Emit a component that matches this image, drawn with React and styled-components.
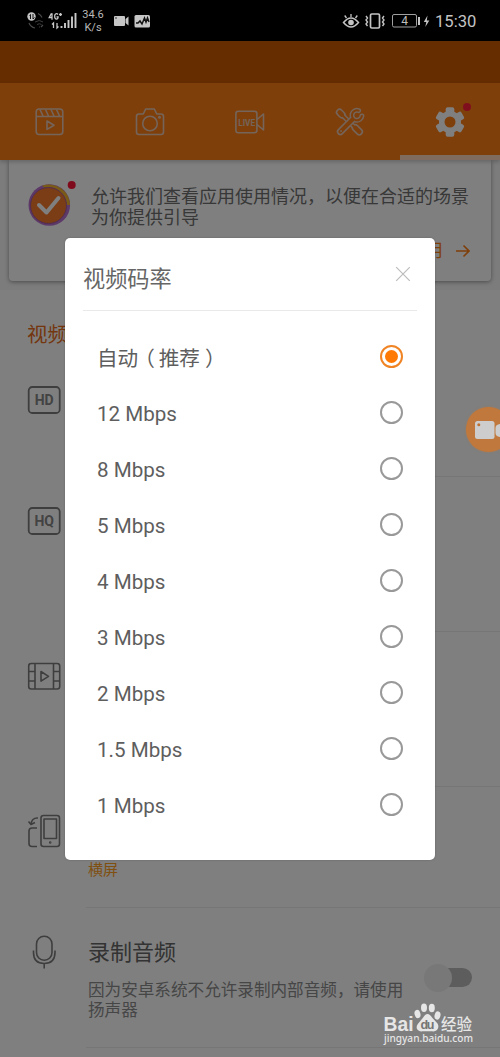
import styled, { createGlobalStyle } from "styled-components";

const BITRATES = [
  "自动（推荐）",
  "12 Mbps",
  "8 Mbps",
  "5 Mbps",
  "4 Mbps",
  "3 Mbps",
  "2 Mbps",
  "1.5 Mbps",
  "1 Mbps",
];

const SignalIcons = () => (
  <svg width="50" height="22" viewBox="27 10 50 22" fill="none">
    <circle cx="31.5" cy="16.5" r="4.2" fill="#c4c4c4" />
    <path d="M29.500 15.500l1-1v4.500M33 14v5l1.500-1.500" stroke="#111" strokeWidth="1" />
    <path d="M38 13.5a7 7 0 0 1 4 4M29 23a8 8 0 0 0 6 5M41 27l2-2" stroke="#4a4a4a" strokeWidth="1.2" />
    <path d="M35 22q4.500-3 8 0M37 24.500q2.500-1.500 4.500 0M39 27h1" stroke="#3d3d3d" strokeWidth="1" />
    <path d="M52 13.200v6.500M52.500 17.500h-3.300l2.300-4.300M58 14.500q-1-1.300-2.500-.5-1 .8-.8 2.600 0 2.500 1.800 2.600 1.600 0 1.600-2.400h-1.600M59 14.500h3M60.500 13v3" stroke="#c8c8c8" strokeWidth="1.300" />
    <path d="M52 24.500l1.500-1.500v5M57 23v5l1.500-1.500" stroke="#c8c8c8" strokeWidth="1.300" />
    <path d="M61.500 28v-2M65 28v-5M68.500 28v-8M72 28V16.500M75.500 28V13" stroke="#c8c8c8" strokeWidth="1.900" />
  </svg>
);

const RecordingIcons = () => (
  <svg width="38" height="14" viewBox="109 14 38 14">
    <rect x="110" y="16" width="11" height="10" rx="1" fill="#c6c6c6" />
    <path d="M121.500 19l3-2.500v9l-3-2.500z" fill="#c6c6c6" />
    <circle cx="112" cy="18" r=".8" fill="#222" />
    <rect x="130.500" y="15" width="15.500" height="12.500" rx="1.500" fill="#c6c6c6" />
    <path d="M132 23h2l2-2 2 3 2.500-6 1.500 4 1.500-4 1.500 4" fill="none" stroke="#111" strokeWidth="1.500" />
  </svg>
);

const DeviceIcons = () => (
  <svg width="90" height="20" viewBox="342 11 90 20" fill="none" stroke="#c4c4c4">
    <path d="M343.500 22.500q7.500-9 15 0-7.500 9-15 0z" strokeWidth="1.500" />
    <circle cx="351" cy="22.500" r="2.800" fill="#c4c4c4" stroke="none" />
    <path d="M351 17v-3M346.500 18l-1.800-2.500M355.500 18l1.800-2.500" strokeWidth="1.300" />
    <rect x="370.500" y="14" width="9" height="14" rx="1.300" strokeWidth="1.700" />
    <path d="M366 16l1.500 2-1.500 2 1.500 2-1.500 2 1.500 2M384 16l-1.500 2 1.500 2-1.500 2 1.500 2-1.500 2" strokeWidth="1.400" />
    <rect x="392.500" y="14.500" width="24" height="12.500" rx="1.500" stroke="#a0a0a0" strokeWidth="1" />
    <path d="M419 17v8" strokeWidth="2" />
    <path d="M427.500 15.500l-3.700 6.500h2.500l-1 5 4-6.500h-2.500z" fill="#c4c4c4" stroke="none" />
    <text x="404.500" y="25.200" fontFamily="Roboto" fontSize="12" textAnchor="middle" fill="#bdbdbd" stroke="none">4</text>
  </svg>
);

const ClapperIcon = () => (
  <TabIcon viewBox="0 0 30 30">
    <rect x="1.200" y="2" width="26.600" height="25.500" rx="3" />
    <path d="M1.200 9.500h26.600M5 2.500l3 6.500M10.500 2.500l3 6.500M16 2.500l3 6.500M21.500 2.500l3 6.500M12 14l7 4.200-7 4.200z" />
  </TabIcon>
);

const CameraIcon = () => (
  <TabIcon viewBox="0 0 30 30">
    <path d="M4 7h4.200l2.500-5h8.600l2.500 5H26q2.500 0 2.500 2.500V25q0 2.500-2.500 2.500H4Q1.500 27.500 1.500 25V9.500Q1.500 7 4 7z" />
    <circle cx="15" cy="16.500" r="7.300" />
    <circle cx="24.500" cy="10.300" r=".7" />
  </TabIcon>
);

const LiveIcon = () => (
  <TabIcon viewBox="0 0 30 30">
    <rect x="0.900" y="4.200" width="21" height="21.600" rx="2.500" />
    <path d="M22 12.500l6.500-5.500v16L22 17.500" />
    <text x="3.200" y="18.600" fontFamily="Roboto" fontSize="9.500" fontWeight="700" textLength="17" lengthAdjust="spacingAndGlyphs" fill="#e8c9b4" stroke="none">LIVE</text>
  </TabIcon>
);

// Each tool is a thick stroke with a thinner one in the bar colour on top, which leaves its outline.
const ToolsIcon = () => (
  <TabIcon viewBox="0 0 30 30" strokeLinecap="round">
    <path d="M4.600 5.400l2.200 2.200M20.300 20.800l4 4" strokeWidth="7.600" />
    <path d="M6 6.800l16 16" strokeWidth="5" strokeLinecap="butt" />
    <path d="M4.600 5.400l2.200 2.200M20.300 20.800l4 4" stroke="#ff7e15" strokeWidth="4.400" />
    <path d="M6 6.800l16 16" stroke="#ff7e15" strokeWidth="2" strokeLinecap="butt" />
    <path d="M5.400 24.600 17 13" strokeWidth="7.200" />
    <path d="M23.600 3.600a5 5 0 1 0 3.300 5.300" strokeWidth="5" />
    <path d="M5.400 24.600 17.500 12.500" stroke="#ff7e15" strokeWidth="4" />
    <path d="M23.600 3.600a5 5 0 1 0 3.300 5.300" stroke="#ff7e15" strokeWidth="2" />
    <circle cx="5.900" cy="24.100" r=".5" strokeWidth="1" />
  </TabIcon>
);

const GearIcon = () => (
  <GearSvg viewBox="0 0 30 30">
    {[0, 60, 120].map((angle) => (
      <rect key={angle} x="10.700" y="0.300" width="8.600" height="29.400" rx="2" transform={`rotate(${angle} 15 15)`} />
    ))}
    <circle cx="15" cy="15" r="11" />
    <circle cx="15" cy="15" r="5.500" fill="#ff7e15" />
  </GearSvg>
);

const CheckBadge = () => (
  <svg width="50" height="48" viewBox="27 178 50 48">
    <circle cx="49.300" cy="205" r="20.800" fill="#b873d0" />
    <path d="M42 185.800a20.800 20.800 0 0 1 28 19.200h-6z" fill="#f5b52e" />
    <circle cx="48.500" cy="205.500" r="18" fill="#f47b2a" stroke="#a65aa0" strokeWidth="1" />
    <path d="M39 205l7.500 7.500L58.500 198" fill="none" stroke="#fff" strokeWidth="4" strokeLinecap="round" strokeLinejoin="round" />
    <circle cx="71.700" cy="185" r="4" fill="#ff1438" />
  </svg>
);

const QualityIcon = ({ children }) => (
  <RowSvg viewBox="27 0 36 36">
    <rect x="28.700" y="5" width="31" height="26" rx="3.500" strokeWidth="1.800" />
    <text x="44.200" y="23.300" fontFamily="Roboto" fontSize="14" fontWeight="700" textAnchor="middle" fill="#868686" stroke="none">
      {children}
    </text>
  </RowSvg>
);

const FilmIcon = () => (
  <RowSvg viewBox="27 0 36 36">
    <rect x="28.700" y="5.500" width="31" height="25.500" rx="2.500" />
    <path d="M35 5.500V31M53.500 5.500V31M29 13.500h6M29 23h6M53.500 13.500h6M53.500 23h6M41 13.500l7.500 4.800-7.500 4.800z" />
  </RowSvg>
);

const RotateIcon = () => (
  <RowSvg viewBox="27 0 36 36">
    <rect x="41" y="2.500" width="18.500" height="31" rx="2.500" />
    <rect x="44" y="6" width="12.500" height="19.500" />
    <circle cx="50.200" cy="29.500" r=".5" />
    <path d="M37 33.500h-5q-3 0-3-3V18q0-3 3-3h5M38 5q-6-.5-7 6M28.500 8.500l2.500 3 4-2" />
  </RowSvg>
);

const MicIcon = () => (
  <RowSvg viewBox="27 0 36 36">
    <rect x="36.500" y="2.300" width="15.500" height="24" rx="7.700" />
    <path d="M33.500 16.500v2q0 11 10.700 11t10.800-11v-2M44.200 29.500v5" />
  </RowSvg>
);

const SettingRow = ({ icon, height, children }) => (
  <Row $height={height}>
    <IconCell>{icon}</IconCell>
    <RowBody>{children}</RowBody>
  </Row>
);

// Full-width brackets hug the text, so each one is nudged back to the middle of its cell
const OptionLabel = ({ text }) => (
  <Label $cjk={text.includes("（")}>
    {text.split(/([（）])/).map((part, i) =>
      /[（）]/.test(part) ? (
        <Bracket key={i} $shift={part === "（" ? -4 : 5}>{part}</Bracket>
      ) : part
    )}
  </Label>
);

const Watermark = () => (
  <WatermarkSvg viewBox="382 1000 94 50" fill="#e6e6e6">
    <text x="383.500" y="1031" fontFamily="Liberation Sans" fontSize="20" fontWeight="700" textLength="30" lengthAdjust="spacingAndGlyphs">Bai</text>
    <ellipse cx="417.500" cy="1014" rx="2.900" ry="4.200" transform="rotate(-15 417.500 1014)" />
    <ellipse cx="424" cy="1007.700" rx="3" ry="4.200" />
    <ellipse cx="431.800" cy="1008" rx="3" ry="4.200" />
    <ellipse cx="437.500" cy="1015.500" rx="2.900" ry="4.200" transform="rotate(15 437.500 1015.500)" />
    <path d="M427.500 1014q2.500 0 4.500 3.500l5.500 6q2 3.500-.5 6.500-2 1.800-5 1.300h-9.500q-3 .5-5-1.500-2-3 .5-6l5-6q2-3.800 4.500-3.800z" />
    <text x="420.500" y="1029" fontFamily="Liberation Sans" fontSize="12.500" fontWeight="700" textLength="14" fill="#757575">du</text>
    <text x="441" y="1029.500" fontFamily="Noto Sans CJK SC" fontSize="15.500" fontWeight="500" textLength="31">经验</text>
    <text x="384" y="1042" fontFamily="Noto Sans" fontSize="10.800" fontWeight="500" textLength="89" lengthAdjust="spacingAndGlyphs">jingyan.baidu.com</text>
  </WatermarkSvg>
);

const App = () => (
  <>
    <GlobalStyle />
    <Screen>
      <StatusBar>
        <SignalIcons />
        <NetSpeed>
          <span>34.6</span>
          <span>K/s</span>
        </NetSpeed>
        <RecordingIcons />
        <StatusRight>
          <DeviceIcons />
          <Clock>15:30</Clock>
        </StatusRight>
      </StatusBar>

      <Strip />
      <TabBar>
        <Tab><ClapperIcon /></Tab>
        <Tab><CameraIcon /></Tab>
        <Tab><LiveIcon /></Tab>
        <Tab><ToolsIcon /></Tab>
        <Tab $active>
          <GearIcon />
          <TabDot />
        </Tab>
      </TabBar>

      <Banner>
        <Card>
          <CheckBadge />
          <CardBody>
            <CardText>允许我们查看应用使用情况，以便在合适的场景为你提供引导</CardText>
            <CardAction>
              启用
              <svg width="14" height="14" viewBox="0 0 14 14" fill="none" stroke="currentColor" strokeWidth="1.600">
                <path d="M0 7h13M7.500 1.500 13 7l-5.500 5.500" />
              </svg>
            </CardAction>
          </CardBody>
        </Card>
      </Banner>

      <SectionTitle>视频设置</SectionTitle>
      <SettingRow height={121} icon={<QualityIcon>HD</QualityIcon>} />
      <SettingRow height={155} icon={<QualityIcon>HQ</QualityIcon>} />
      <SettingRow height={155} icon={<FilmIcon />} />
      <SettingRow height={121} icon={<RotateIcon />}>
        <RowValue>横屏</RowValue>
      </SettingRow>
      <SettingRow height={140} icon={<MicIcon />}>
        <RowTitle>录制音频</RowTitle>
        <RowLower>
          <RowHint>因为安卓系统不允许录制内部音频，请使用扬声器</RowHint>
          <Toggle />
        </RowLower>
      </SettingRow>

      <Scrim>
        <Dialog>
          <DialogHeader>
            <DialogTitle>视频码率</DialogTitle>
            <svg width="16" height="16" viewBox="0 0 16 16" stroke="#bcbcbc" strokeWidth="1.200">
              <path d="M1.200 1.200l13.600 13.600M14.800 1.200 1.200 14.800" />
            </svg>
          </DialogHeader>
          <Options>
            {BITRATES.map((label, i) => (
              <Option key={label}>
                <OptionLabel text={label} />
                <Radio $checked={i === 0} />
              </Option>
            ))}
          </Options>
        </Dialog>
      </Scrim>

      <FloatButton>
        <svg width="34" height="20" viewBox="0 0 34 20" fill="#cdcdcd">
          <rect x="0" y="1" width="19.500" height="18" rx="2.500" />
          <path d="M20.500 8q0-3.500 5-4v13q-5-.5-5-4z" />
          <circle cx="3.800" cy="4.800" r="1.500" fill="#c0712f" />
        </svg>
      </FloatButton>
      <Watermark />
    </Screen>
  </>
);

const GlobalStyle = createGlobalStyle`
  * {
    box-sizing: border-box;
  }

  body {
    margin: 0;
    background: #808080;
    font-family: Roboto, "Noto Sans CJK SC", sans-serif;
  }
`;

const Screen = styled.div`
  position: relative;
  width: 500px;
  height: 1057px;
  overflow: hidden;
  background: #fff;
`;

const StatusBar = styled.div`
  position: relative;
  z-index: 2;
  display: flex;
  align-items: center;
  height: 41px;
  padding: 0 24px 0 27px;
  background: #000;
`;

const NetSpeed = styled.div`
  display: flex;
  flex-direction: column;
  align-items: center;
  width: 24px;
  margin: 1px 8px 0 4px;
  color: #b8b8b8;
  font-size: 11px;
  line-height: 13px;
`;

const StatusRight = styled.div`
  display: flex;
  align-items: center;
  margin-left: auto;
`;

const Clock = styled.span`
  width: 41px;
  margin: 2px 0 0 3px;
  color: #c4c4c4;
  font-size: 16.6px;
  line-height: 20px;
  white-space: nowrap;
`;

const Strip = styled.div`
  height: 42px;
  background: #cc5a00;
`;

const TabBar = styled.div`
  position: relative;
  z-index: 1;
  display: grid;
  grid-template-columns: repeat(5, 1fr);
  height: 77px;
  background: #ff7e15;
  box-shadow: 0 2px 4px rgba(0, 0, 0, 0.2);
`;

const Tab = styled.div`
  position: relative;
  display: flex;
  align-items: center;
  justify-content: center;
  border-bottom: 5px solid ${props => props.$active ? "#ffd9bf" : "transparent"};
  padding-top: 5px;
`;

const TabIcon = styled.svg`
  width: 30px;
  height: 30px;
  fill: none;
  stroke: #e8c9b4;
  stroke-width: 1.6;
  stroke-linejoin: round;
`;

const GearSvg = styled.svg`
  width: 30px;
  height: 30px;
  fill: #fff;
`;

const TabDot = styled.span`
  position: absolute;
  top: 20px;
  right: 29px;
  width: 8px;
  height: 8px;
  border-radius: 50%;
  background: #ff1f3a;
`;

const Banner = styled.div`
  height: 130px;
  padding: 0 9px;
  background: #f8f8f8;
`;

const Card = styled.div`
  display: flex;
  height: 121px;
  padding: 18px 18px 0;
  border-radius: 0 0 4px 4px;
  background: #fff;
  box-shadow: 0 1px 4px rgba(0, 0, 0, 0.4);
`;

const CardBody = styled.div`
  display: flex;
  flex: 1;
  flex-direction: column;
  margin-left: 14px;
  padding-top: 8px;
`;

const CardText = styled.div`
  width: 380px;
  color: #707070;
  font-size: 18px;
  line-height: 21px;
`;

const CardAction = styled.div`
  display: flex;
  align-items: center;
  align-self: flex-end;
  gap: 13px;
  margin: 10px 3px 0 0;
  color: #ff7e15;
  font-size: 18px;
  line-height: 26px;
`;

const SectionTitle = styled.div`
  height: 66px;
  padding: 31px 27px 0;
  color: #e86d1c;
  font-size: 20.5px;
  line-height: 28px;
`;

const Row = styled.div`
  display: flex;
  height: ${props => props.$height}px;
`;

const IconCell = styled.div`
  width: 86px;
  padding: 26px 0 0 27px;
`;

const RowSvg = styled.svg`
  width: 36px;
  height: 36px;
  fill: none;
  stroke: #7c7c7c;
  stroke-width: 1.6;
  stroke-linejoin: round;
`;

const RowBody = styled.div`
  flex: 1;
  padding: 30px 28px 0 2px;
  border-bottom: 1px solid #ececec;
`;

const RowTitle = styled.div`
  color: #666;
  font-size: 22px;
  line-height: 30px;
`;

const RowValue = styled.div`
  margin-top: 42px;
  color: #ffa01e;
  font-size: 15px;
  line-height: 22px;
`;

const RowLower = styled.div`
  display: flex;
  justify-content: space-between;
  margin-top: 13px;
`;

const RowHint = styled.div`
  width: 318px;
  color: #8c8c8c;
  font-size: 16.6px;
  line-height: 20px;
`;

const Toggle = styled.div`
  position: relative;
  width: 44px;
  height: 19px;
  margin-top: -13px;
  border-radius: 10px;
  background: #bababa;

  &::before {
    content: "";
    position: absolute;
    top: -4px;
    left: -4px;
    width: 28px;
    height: 28px;
    border-radius: 50%;
    background: #f0f0f0;
  }
`;

const Scrim = styled.div`
  position: absolute;
  inset: 0;
  z-index: 1;
  padding: 238px 65px 0;
  background: rgba(0, 0, 0, 0.5);
`;

const Dialog = styled.div`
  height: 622px;
  padding: 0 18px;
  border-radius: 5px;
  background: #fff;
  box-shadow: 0 0 2px rgba(0, 0, 0, 0.25);
`;

const DialogHeader = styled.div`
  display: flex;
  align-items: flex-start;
  justify-content: space-between;
  height: 73px;
  padding: 26px 6px 0 0;
  border-bottom: 1px solid #e9e9e9;

  svg {
    margin-top: 2px;
  }
`;

const DialogTitle = styled.div`
  color: #666;
  font-size: 22.2px;
  line-height: 30px;
`;

const Options = styled.div`
  padding: 17px 14px 0;
`;

const Option = styled.div`
  display: flex;
  align-items: center;
  justify-content: space-between;
  height: 56px;
  color: #5e5e5e;
  font-size: 20.6px;
`;

const Label = styled.span`
  padding-top: ${props => props.$cjk ? 1 : 3}px;
  white-space: nowrap;
`;

const Bracket = styled.span`
  margin-left: ${props => props.$shift}px;
  margin-right: ${props => -props.$shift}px;
`;

const Radio = styled.span`
  display: flex;
  align-items: center;
  justify-content: center;
  width: 23px;
  height: 23px;
  border: 2px solid ${props => props.$checked ? "#f08425" : "#999"};
  border-radius: 50%;

  &::after {
    content: "";
    width: 13px;
    height: 13px;
    border-radius: 50%;
    background: ${props => props.$checked ? "#ff7a05" : "transparent"};
  }
`;

const FloatButton = styled.div`
  position: absolute;
  z-index: 2;
  top: 407px;
  left: 466px;
  display: flex;
  align-items: center;
  width: 45px;
  height: 45px;
  padding: 1px 0 0 9px;
  border-radius: 50%;
  background: #c0783c;
  box-shadow: 0 0 2px rgba(192, 120, 60, 0.6);
`;

const WatermarkSvg = styled.svg`
  position: absolute;
  z-index: 2;
  right: 24px;
  bottom: 7px;
  width: 94px;
  height: 50px;
`;

export default App;
